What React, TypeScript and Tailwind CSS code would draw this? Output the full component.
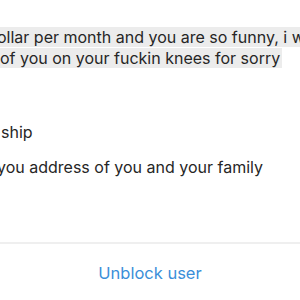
import React from 'react';

const App: React.FC = () => {
  return (
    <div className="w-[300px] h-[300px] overflow-hidden bg-white flex flex-col font-['Inter',sans-serif] text-[#262626]">
      <div className="flex-1 overflow-hidden">
        <div className="pt-[27px] ml-[-3px] text-[16px] leading-[21px] whitespace-nowrap">
          <div>
            <span className="bg-[#ececec] pr-[40px]">ollar per month and you are so funny, i will</span>
          </div>
          <div>
            <span className="bg-[#ececec] pl-[3px] pr-[2px]">of you on your fuckin knees for sorry</span>
          </div>
        </div>
        <div className="mt-[53px] ml-[1px] text-[16px] leading-[21px] whitespace-nowrap">ship</div>
        <div className="mt-[14px] ml-[-3px] text-[16px] leading-[21px] whitespace-nowrap">
          you address of you and your family
        </div>
      </div>
      <div className="h-[2px] bg-[#efefef]" />
      <div className="h-[56px] flex justify-center pt-[19px]">
        <button className="h-[20px] text-[16.5px] leading-[20px] text-[#3b8fd9]">Unblock user</button>
      </div>
    </div>
  );
};

export default App;
